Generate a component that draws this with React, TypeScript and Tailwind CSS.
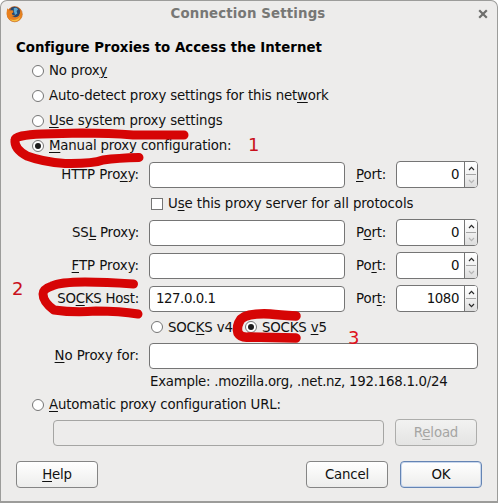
import type { ReactNode } from "react";

function K({ children }: { children: ReactNode }) {
  return <span className="underline decoration-1 underline-offset-2">{children}</span>;
}

function Radio({ checked = false }: { checked?: boolean }) {
  return (
    <span className="flex h-3 w-3 shrink-0 items-center justify-center rounded-full border border-[#757575] bg-white">
      {checked && <span className="h-1.5 w-1.5 rounded-full bg-[#1c1c1c]" />}
    </span>
  );
}

function RadioRow({ checked, children }: { checked?: boolean; children: ReactNode }) {
  return (
    <label className="flex h-[25px] items-center gap-[5px] pl-8">
      <Radio checked={checked} />
      <span>{children}</span>
    </label>
  );
}

function Arrow({ down = false, dim = false }: { down?: boolean; dim?: boolean }) {
  return (
    <svg width="7" height="5" viewBox="0 0 7 5" fill="none" stroke={dim ? "#b5b5b5" : "#2a2a2a"} strokeWidth="1.2">
      <path d={down ? "M1 1L3.5 3.6L6 1" : "M1 4L3.5 1.4L6 4"} />
    </svg>
  );
}

function Spinner({ value }: { value: string }) {
  return (
    <div className="flex h-[27px] w-[82px] overflow-hidden rounded-[4px] border border-[#757575] bg-white">
      <div className="flex flex-1 items-center justify-end pr-[5px] tracking-[-0.4px]">{value}</div>
      <div className="flex w-[13px] flex-col border-l border-[#757575] bg-[#efefef]">
        <div className="flex flex-1 items-center justify-center bg-linear-to-b from-white to-[#f2f2f2]">
          <Arrow />
        </div>
        <div className="mx-px h-px bg-[#a5a5a5]" />
        <div className="flex flex-1 items-center justify-center bg-linear-to-b from-[#f0f0f0] to-[#dddddd]">
          <Arrow down dim={value === "0"} />
        </div>
      </div>
    </div>
  );
}

function HostRow({ label, host = "", port, portLabel }: { label: ReactNode; host?: string; port: string; portLabel: ReactNode }) {
  return (
    <div className="flex h-[27px] items-center">
      <span className="w-[139px] text-right">{label}</span>
      <div className="ml-[10px] flex h-[26px] w-[196px] items-center self-end rounded-[4px] border border-[#757575] bg-white pl-1.5 pb-0.5 tracking-[-0.45px]">{host}</div>
      <span className="ml-[11px] w-10">{portLabel}</span>
      <Spinner value={port} />
    </div>
  );
}

function Button({ kind = "normal", children }: { kind?: "normal" | "primary" | "disabled"; children: ReactNode }) {
  const tone =
    kind === "primary"
      ? "border-[#6484b4] shadow-[inset_0_0_0_1px_#c9d7ec]"
      : kind === "disabled"
        ? "border-[#adadab] text-[#a5a5a3]"
        : "border-[#858585]";
  const fill = kind === "disabled" ? "from-[#f2f2f1] to-[#e4e4e3]" : "from-white to-[#ededec]";
  return (
    <button className={`flex h-[27px] w-[82px] items-center justify-center rounded-[4px] border bg-linear-to-b ${fill} ${tone}`}>
      <span>{children}</span>
    </button>
  );
}

function Firefox() {
  return (
    <svg width="17" height="17" viewBox="0 0 17 17">
      <defs>
        <linearGradient id="fox" x1="0" y1="0" x2="1" y2="1">
          <stop offset="0" stopColor="#b84f16" />
          <stop offset=".55" stopColor="#e8771c" />
          <stop offset="1" stopColor="#efb236" />
        </linearGradient>
      </defs>
      <circle cx="8.7" cy="8.2" r="7.6" fill="url(#fox)" stroke="#b7621f" strokeWidth=".6" />
      <path d="M5 2Q9-.8 13.2 2.7Q15.8 7 12.4 10.3Q8.2 12.5 5.4 9.6L4 5Z" fill="#28486f" />
      <path d="M7.7 2.2Q11 .8 12 3.5L10.6 5L11.3 7.6L9 9L8 5.8Z" fill="#5da9d2" />
      <path d="M1.2 2.2L3.5 4.4Q5.8 3.8 7.2 4.6L7.4 6.3L5.7 7.6L6.8 9.2L9.2 9.3Q7.5 11.3 4.8 9.8Q6.9 13.4 11 11.7Q14.3 10 14.1 4.5Q18 11 12.9 14.4Q7.8 17 3.3 13.6Q.2 10.5.7 6Z" fill="#e8801e" />
      <path d="M3.2 12.5Q9.5 16.4 14.6 10.2Q13.2 15.1 8.7 15.3Q5.4 15.2 3.2 12.5Z" fill="#f4c144" />
    </svg>
  );
}

export default function App() {
  return (
    <div className="h-[503px] w-[498px] overflow-hidden bg-white">
      <div className="relative flex h-[503px] w-[498px] flex-col rounded-t-[7px] border border-b-2 border-[#9c9c9a] bg-[#edeceb] font-['DejaVu_Sans','Noto_Sans',sans-serif] text-[13.33px] leading-[17px] tracking-[-0.17px] whitespace-nowrap text-[#111]">
        <div className="-ml-px flex h-[26px] items-center pl-[6px]">
          <Firefox />
          <h1 className="flex-1 pr-[5px] pb-0.5 text-center font-bold tracking-[0.15px] text-[#777775]">Connection Settings</h1>
          <svg className="mr-[9px]" width="10" height="10" viewBox="0 0 10 10" stroke="#6e6e6c" strokeWidth="2.2">
            <path d="M1.2 1.2L8.8 8.8M8.8 1.2L1.2 8.8" />
          </svg>
        </div>
        <div className="-ml-px flex flex-col">
          <h2 className="flex h-[31px] items-end pb-[2px] pl-4 font-bold tracking-[0.02px] text-black">Configure Proxies to Access the Internet</h2>
          <RadioRow>No prox<K>y</K></RadioRow>
          <RadioRow>Auto-detect proxy settings for this net<K>w</K>ork</RadioRow>
          <RadioRow><span className="tracking-[-0.1px]"><K>U</K>se system proxy settings</span></RadioRow>
          <RadioRow checked><K>M</K>anual proxy configuration:</RadioRow>
          <div className="mt-[3px]">
            <HostRow label={<span className="tracking-[-0.05px]">HTTP Pro<K>x</K>y:</span>} port="0" portLabel={<><K>P</K>ort:</>} />
          </div>
          <label className="flex h-[31px] items-center gap-[5px] pl-[151px]">
            <span className="h-3 w-3 border border-[#757575] bg-white" />
            <span className="tracking-[-0.1px]">U<K>s</K>e this proxy server for all protocols</span>
          </label>
          <div className="flex flex-col gap-1.5">
            <HostRow label={<>SS<K>L</K> Proxy:</>} port="0" portLabel={<>P<K>o</K>rt:</>} />
            <HostRow label={<span className="tracking-[-0.05px]"><K>F</K>TP Proxy:</span>} port="0" portLabel={<>Po<K>r</K>t:</>} />
            <HostRow label={<span className="tracking-[-0.25px]">SO<K>C</K>KS Host:</span>} host="127.0.0.1" port="1080" portLabel={<>Por<K>t</K>:</>} />
          </div>
          <div className="flex h-[30px] items-center pl-[151px]">
            <label className="flex w-[94px] items-center gap-[5px]"><Radio /><span>SOC<K>K</K>S v4</span></label>
            <label className="flex items-center gap-[5px]"><Radio checked /><span>SOCKS <K>v</K>5</span></label>
          </div>
          <div className="flex h-[27px] items-center">
            <span className="w-[139px] text-right tracking-[-0.1px]"><K>N</K>o Proxy for:</span>
            <div className="ml-[10px] h-[26px] w-[329px] self-end rounded-[4px] border border-[#757575] bg-white" />
          </div>
          <p className="flex h-6 items-center pl-[150px] tracking-[-0.25px]">Example: .mozilla.org, .net.nz, 192.168.1.0/24</p>
          <div className="-my-px"><RadioRow><K>A</K>utomatic proxy configuration URL:</RadioRow></div>
          <div className="mt-[3px] flex h-[27px] items-end gap-[11px] pl-[53px]">
            <div className="h-[26px] w-[331px] rounded-[4px] border border-[#a5a5a3]" />
            <Button kind="disabled">R<K>e</K>load</Button>
          </div>
          <div className="mt-[15px] flex pl-4">
            <Button><K>H</K>elp</Button>
            <div className="ml-[208px] flex gap-3">
              <Button>Cancel</Button>
              <Button kind="primary">OK</Button>
            </div>
          </div>
        </div>
        <svg className="pointer-events-none absolute -top-px -left-px" width="498" height="503" viewBox="0 0 498 503" fill="none" stroke="#d60505" strokeWidth="9" strokeLinecap="round" strokeLinejoin="round">
          <path d="M184 135L133 135Q110 133 82 133L42 134Q15 135 15 140Q14 149 27 156Q43 162 65 163.500Q92 164 103 160Q118 158 139 157.500" />
          <path d="M133.500 284Q105 282 85 282Q60 282 52 286Q43 289 43 294Q43 302 54 310Q75 313 96 311Q120 311 138 314" />
          <path d="M296 316Q279 315 270 314Q248 313 241 319Q236 326 238 333Q241 338 249 337L296 338" strokeWidth="9.500" />
        </svg>
        <span className="absolute top-[133px] left-[247px] text-[18px] leading-[22px] text-[#c9101c]">1</span>
        <span className="absolute top-[277px] left-[11px] text-[18px] leading-[22px] text-[#c9101c]">2</span>
        <span className="absolute top-[326px] left-[347px] text-[18px] leading-[22px] text-[#de101c]">3</span>
      </div>
    </div>
  );
}
